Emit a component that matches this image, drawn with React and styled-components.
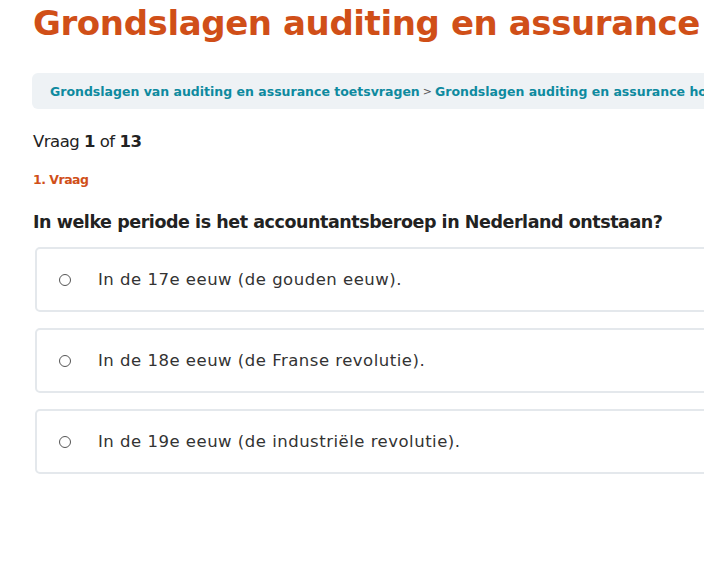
import React from "react";
import styled, { createGlobalStyle } from "styled-components";

const GlobalStyle = createGlobalStyle`
  html, body { margin: 0; padding: 0; background: #fff; overflow: hidden; }
  body { font-family: "DejaVu Sans", "Open Sans", sans-serif; color: #222; }
`;

const Page = styled.div`
  width: 780px;
  padding: 0 0 0 32px;
  box-sizing: border-box;
`;

const Title = styled.h1`
  margin: 0;
  padding: 1px 0 0 1px;
  font-size: 34px;
  line-height: 44px;
  font-weight: 700;
  color: #d04f18;
  letter-spacing: -0.4px;
  white-space: nowrap;
`;

const Breadcrumb = styled.nav`
  margin-top: 28px;
  background: #eef2f5;
  border-radius: 6px;
  height: 36px;
  display: flex;
  align-items: center;
  padding-left: 18px;
  font-size: 12.5px;
  font-weight: 700;
  white-space: nowrap;
`;

const Crumb = styled.a`
  color: #0e8a9f;
  text-decoration: none;
`;

const Sep = styled.span`
  color: #555;
  font-weight: 400;
  font-size: 11px;
  margin: 0 3px;
`;

const Counter = styled.div`
  margin-top: 22px;
  padding-left: 1px;
  font-size: 16.5px;
  line-height: 22px;
  letter-spacing: -0.5px;
  color: #222;
  b { font-weight: 700; }
`;

const QLabel = styled.div`
  margin-top: 18px;
  padding-left: 1px;
  font-size: 12.5px;
  line-height: 18px;
  font-weight: 700;
  letter-spacing: -0.5px;
  color: #d04f18;
`;

const Question = styled.h2`
  margin: 21px 0 0;
  padding-left: 1px;
  font-size: 17.5px;
  line-height: 24px;
  font-weight: 700;
  letter-spacing: -0.45px;
  color: #222;
  white-space: nowrap;
`;

const Options = styled.div`
  margin-top: 13px;
  margin-left: 3px;
  display: flex;
  flex-direction: column;
  gap: 16px;
`;

const Option = styled.label`
  height: 65px;
  box-sizing: border-box;
  border: 2px solid #e4e8ec;
  border-radius: 5px;
  display: flex;
  align-items: center;
  padding-left: 22px;
  cursor: pointer;
`;

const Radio = styled.span`
  width: 10px;
  height: 10px;
  border: 1px solid #555;
  border-radius: 50%;
  flex: none;
`;

const OptionText = styled.span`
  margin-left: 27px;
  font-size: 16.5px;
  letter-spacing: 0.5px;
  color: #333;
  white-space: nowrap;
`;

const answers = [
  "In de 17e eeuw (de gouden eeuw).",
  "In de 18e eeuw (de Franse revolutie).",
  "In de 19e eeuw (de industriële revolutie).",
];

export default function App() {
  return (
    <>
      <GlobalStyle />
      <Page>
        <Title>Grondslagen auditing en assurance</Title>
        <Breadcrumb>
          <Crumb href="#">Grondslagen van auditing en assurance toetsvragen</Crumb>
          <Sep>&gt;</Sep>
          <Crumb href="#">Grondslagen auditing en assurance hoofdstuk 1</Crumb>
        </Breadcrumb>
        <Counter>
          Vraag <b>1</b> of <b>13</b>
        </Counter>
        <QLabel>1. Vraag</QLabel>
        <Question>In welke periode is het accountantsberoep in Nederland ontstaan?</Question>
        <Options>
          {answers.map((a) => (
            <Option key={a}>
              <Radio />
              <OptionText>{a}</OptionText>
            </Option>
          ))}
        </Options>
      </Page>
    </>
  );
}
